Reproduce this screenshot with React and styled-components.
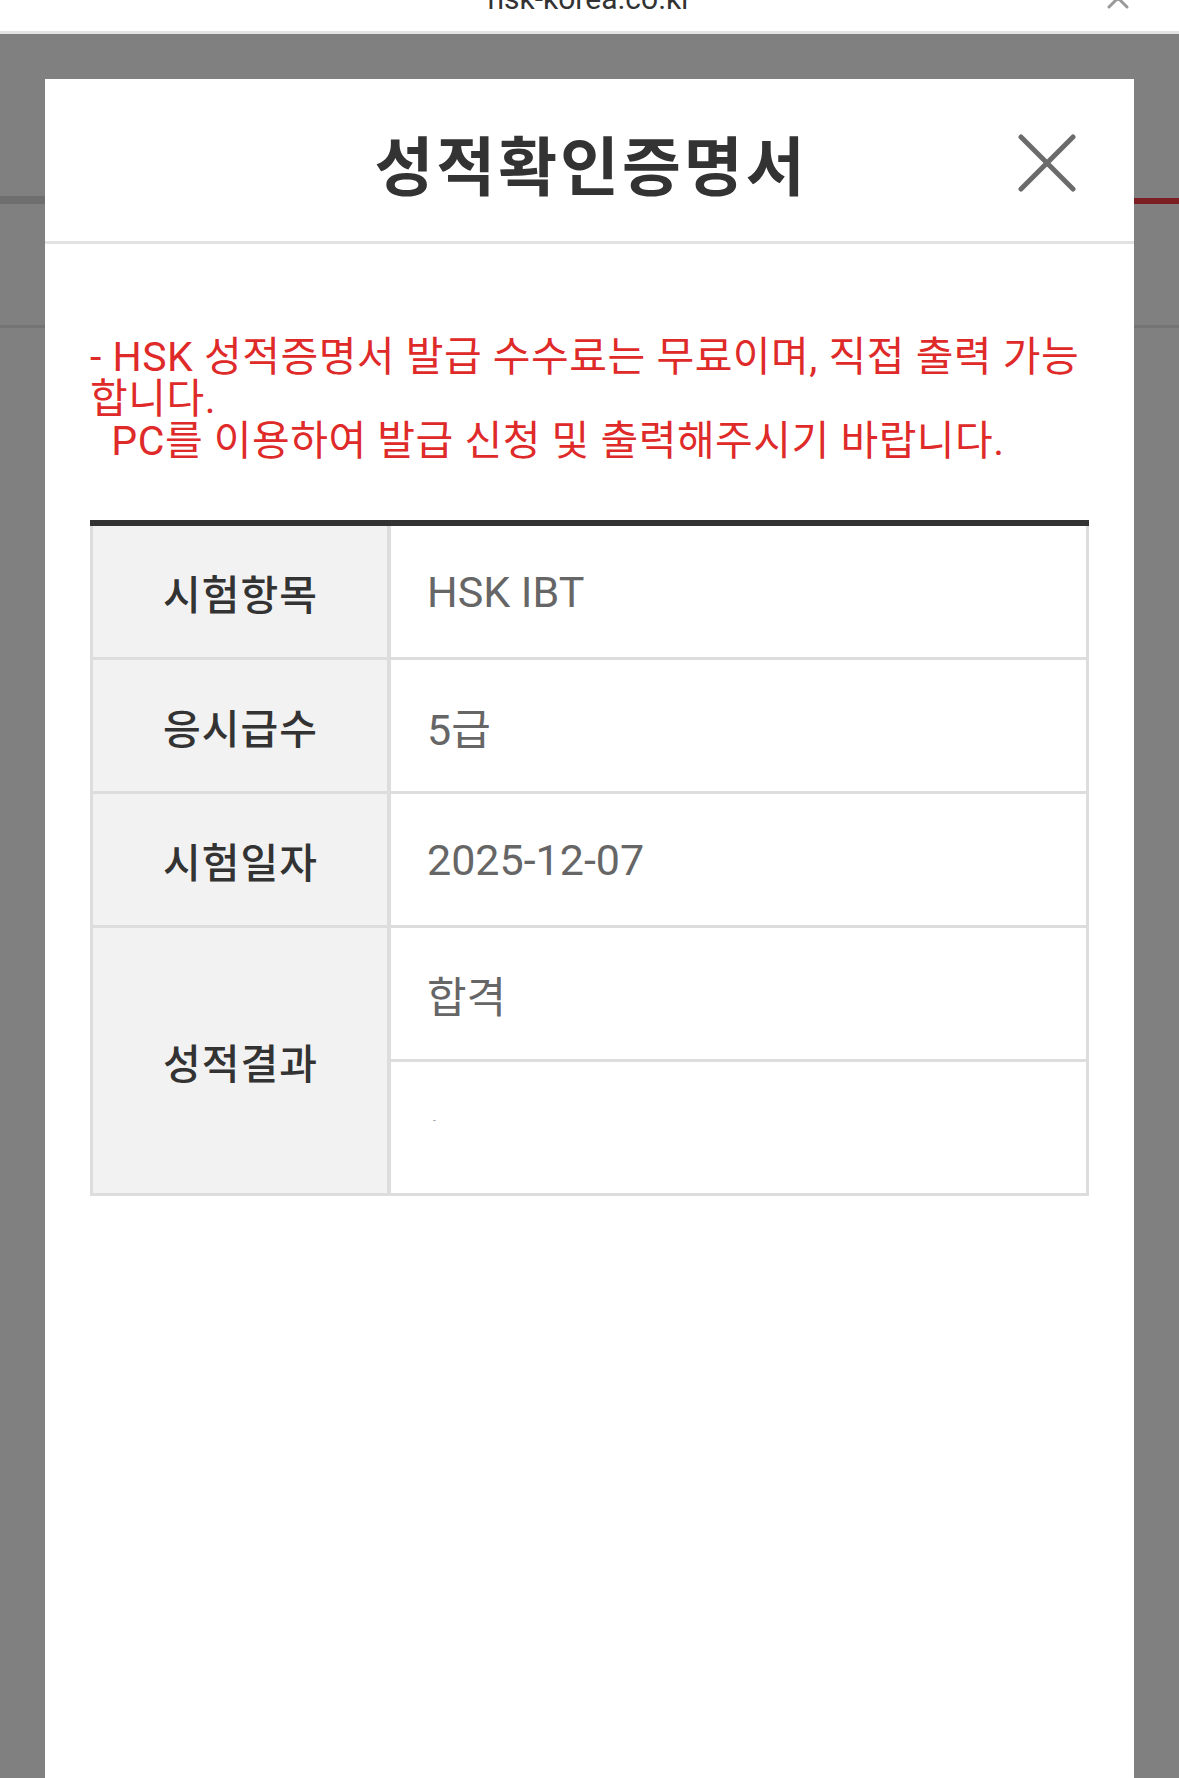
import React from 'react';
import styled, {createGlobalStyle} from "styled-components";

const GlobalStyle = createGlobalStyle`
  html, body {
    margin: 0;
    padding: 0;
    background: #ffffff;
  }
  body {
    font-family: Roboto, "Noto Sans CJK KR", sans-serif;
  }
`;

const Page = styled.div`
  width: 1179px;
  height: 1778px;
  display: flex;
  flex-direction: column;
  overflow: hidden;
`;

const UrlBar = styled.div`
  height: 31px;
  flex-shrink: 0;
  display: grid;
  grid-template-columns: 1fr auto 1fr;
  align-items: start;
  overflow: hidden;
  background: #fff;
  border-bottom: 3px solid #e3e3e3;
`;

const UrlText = styled.span`
  grid-column: 2;
  font-family: Roboto, sans-serif;
  font-size: 30px;
  line-height: 1;
  color: #333;
  margin-top: -16px;
`;

const BarClose = styled.svg`
  justify-self: end;
  margin-right: 50px;
  margin-top: -13px;
`;

const Stage = styled.div`
  flex: 1;
  position: relative;
  background: #808080;
`;

const BehindNav = styled.div`
  height: 162px;
`;

const NavLine = styled.div`
  display: flex;
  height: 8px;
`;

const NavSegment = styled.div`
  flex: ${p => p.$grow};
  background: ${p => p.$color};
  margin-top: ${p => p.$offset}px;
`;

const BehindRule = styled.div`
  margin-top: 121px;
  height: 3px;
  background: #747474;
`;

const Modal = styled.div`
  position: absolute;
  top: 45px;
  left: 45px;
  right: 45px;
  bottom: 0;
  background: #fff;
  display: flex;
  flex-direction: column;
`;

const Header = styled.div`
  height: 162px;
  display: grid;
  grid-template-columns: 1fr auto 1fr;
  align-items: center;
  border-bottom: 3px solid #e2e2e2;
`;

const Title = styled.h1`
  grid-column: 2;
  margin: 4px 0 0 3px;
  font-family: "Noto Sans CJK KR", sans-serif;
  font-size: 64px;
  font-weight: 700;
  letter-spacing: 3px;
  color: #333;
`;

const CloseButton = styled.button`
  justify-self: end;
  margin: 6px 58px 0 0;
  padding: 0;
  border: none;
  background: none;
  width: 58px;
  height: 58px;
  cursor: pointer;
`;

const Body = styled.div`
  padding: 92px 45px 0;
`;

const Notice = styled.p`
  margin: 0 0 58px;
  font-family: Roboto, "Noto Sans CJK KR", sans-serif;
  font-size: 41px;
  line-height: 42px;
  letter-spacing: 0.5px;
  color: #df2a2a;
  white-space: pre;
`;

const Table = styled.div`
  display: grid;
  grid-template-columns: 294px 1fr;
  grid-auto-rows: 131px;
  gap: 3px 4px;
  background: #dddddd;
  border-top: 6px solid #333;
  padding: 0 3px 3px;
`;

const Label = styled.div`
  grid-row: ${p => p.$span ? `span ${p.$span}` : 'auto'};
  background: #f2f2f2;
  display: flex;
  align-items: center;
  justify-content: center;
  padding-left: 1px;
  font-family: "Noto Sans CJK KR", sans-serif;
  font-size: 41px;
  font-weight: 500;
  letter-spacing: 1px;
  color: #333;
`;

const Value = styled.div`
  background: #fff;
  display: flex;
  align-items: center;
  padding-left: ${p => p.$small ? '42px' : '36px'};
  padding-bottom: ${p => p.$small ? '14px' : '0'};
  font-family: Roboto, "Noto Sans CJK KR", sans-serif;
  font-size: ${p => p.$small ? '10px' : '43px'};
  color: ${p => p.$small ? '#999' : '#666'};
`;

const rows = [
    {label: '시험항목', value: 'HSK IBT'},
    {label: '응시급수', value: '5급'},
    {label: '시험일자', value: '2025-12-07'},
];

const App = () => {
    return (
        <Page>
            <GlobalStyle/>
            <UrlBar>
                <UrlText>hsk-korea.co.kr</UrlText>
                <BarClose width="22" height="22" viewBox="0 0 22 22">
                    <path d="M2 2 L20 20 M20 2 L2 20" stroke="#9a9a9a" strokeWidth="3" strokeLinecap="round"/>
                </BarClose>
            </UrlBar>
            <Stage>
                <BehindNav/>
                <NavLine>
                    <NavSegment $grow={1} $color="#6e6e6e" $offset={0}/>
                    <NavSegment $grow={1} $color="#7b1f24" $offset={2}/>
                </NavLine>
                <BehindRule/>
                <Modal>
                    <Header>
                        <Title>성적확인증명서</Title>
                        <CloseButton>
                            <svg width="58" height="58" viewBox="0 0 58 58">
                                <path d="M3 3 L55 55 M55 3 L3 55" stroke="#6b6b6b" strokeWidth="5" strokeLinecap="round"/>
                            </svg>
                        </CloseButton>
                    </Header>
                    <Body>
                        <Notice>{'- HSK 성적증명서 발급 수수료는 무료이며, 직접 출력 가능\n합니다.\n  PC를 이용하여 발급 신청 및 출력해주시기 바랍니다.'}</Notice>
                        <Table>
                            {rows.map(r => (
                                <React.Fragment key={r.label}>
                                    <Label>{r.label}</Label>
                                    <Value>{r.value}</Value>
                                </React.Fragment>
                            ))}
                            <Label $span={2}>성적결과</Label>
                            <Value>합격</Value>
                            <Value $small>-</Value>
                        </Table>
                    </Body>
                </Modal>
            </Stage>
        </Page>
    );
};

export default App;
